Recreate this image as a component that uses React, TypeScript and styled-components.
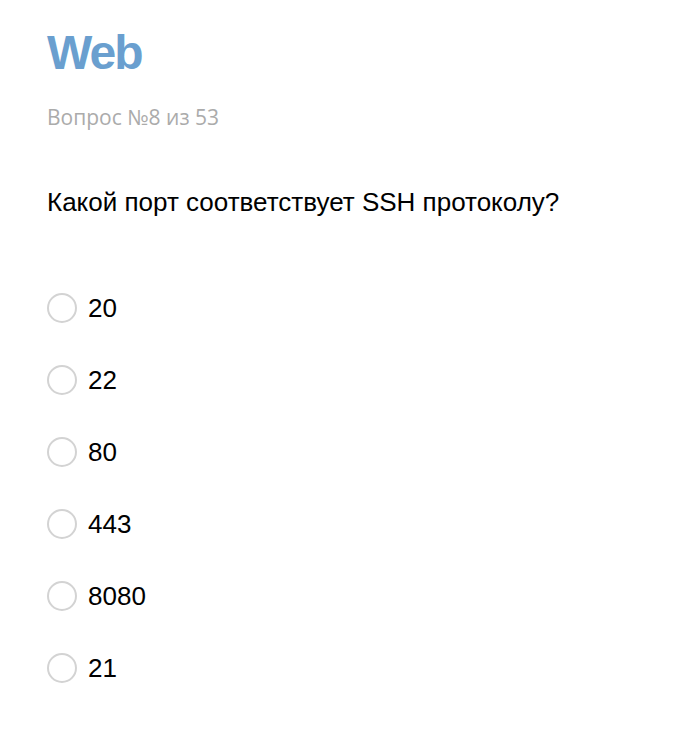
import React from 'react';
import styled, { createGlobalStyle } from 'styled-components';

const GlobalStyle = createGlobalStyle`
  body {
    margin: 0;
    background: #fff;
    font-family: "Liberation Sans", Arial, sans-serif;
  }
`

const answers = ['20', '22', '80', '443', '8080', '21'];

const App = () => {
  return (
    <Page>
      <GlobalStyle />
      <Title>Web</Title>
      <Counter>Вопрос №8 из 53</Counter>
      <Question>Какой порт соответствует SSH протоколу?</Question>
      <Answers>
        {answers.map((a) => (
          <Answer key={a}>
            <Radio type='radio' name='answer' value={a} />
            <AnswerText>{a}</AnswerText>
          </Answer>
        ))}
      </Answers>
    </Page>
  )
};

const Page = styled.div`
  padding: 25px 47px 40px;
  display: flex;
  flex-direction: column;
`
const Title = styled.h1`
  margin: 0;
  font-size: 48px;
  line-height: 56px;
  font-weight: 700;
  letter-spacing: -2px;
  color: #6a9fcf;
`
const Counter = styled.div`
  margin-top: 24px;
  font-family: "Open Sans", sans-serif;
  font-size: 21px;
  line-height: 24px;
  color: #ababab;
`
const Question = styled.div`
  margin-top: 58px;
  font-size: 26px;
  line-height: 30px;
  color: #000;
`
const Answers = styled.div`
  margin-top: 76px;
  display: flex;
  flex-direction: column;
  gap: 42px;
`
const Answer = styled.label`
  display: flex;
  align-items: center;
  gap: 11px;
  height: 30px;
`
const Radio = styled.input`
  appearance: none;
  margin: 0;
  width: 30px;
  height: 30px;
  border: 2px solid #d3d3d3;
  border-radius: 50%;
  background: #fff;
  box-sizing: border-box;
`
const AnswerText = styled.span`
  font-size: 26px;
  color: #000;
`

export default App;
